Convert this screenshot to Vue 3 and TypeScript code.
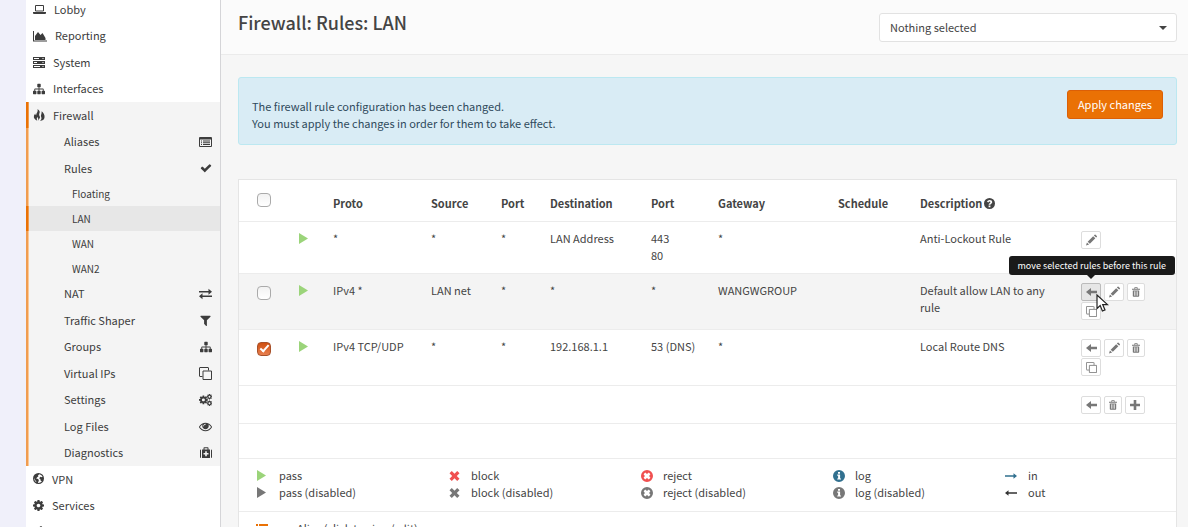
<script setup lang="ts">
import { ref } from 'vue'

interface Icon {
  box: string
  w: number
  h: number
  fill?: string
  line?: string
  lw?: number
}

const COG =
  'M1152 896q0-106-75-181t-181-75-181 75-75 181 75 181 181 75 181-75 75-181zm512-109v222q0 12-8 23t-20 13l-185 28q-19 54-39 91 35 50 107 138 10 12 10 25t-9 23q-27 37-99 108t-94 71q-12 0-26-9l-138-108q-44 23-91 38-16 136-29 186-7 28-36 28h-222q-14 0-24.5-8.5t-11.5-21.5l-28-184q-49-16-90-37l-141 107q-10 9-25 9-14 0-25-11-126-114-165-168-7-10-7-23 0-12 8-23 15-21 51-66.5t54-70.5q-27-50-41-99l-183-27q-13-2-21-12.5t-8-23.5v-222q0-12 8-23t19-13l186-28q14-46 39-92-40-57-107-138-10-12-10-24 0-10 9-23 26-36 98.5-107.5t94.5-71.5q13 0 26 10l138 107q44-23 91-38 16-136 29-186 7-28 36-28h222q14 0 24.5 8.5t11.5 21.5l28 184q49 16 90 37l142-107q9-9 24-9 13 0 25 10 129 119 165 170 7 8 7 22 0 12-8 23-15 21-51 66.5t-54 70.5q26 50 41 98l183 28q13 2 21 12.5t8 23.5z'

const icons: Record<string, Icon> = {
  laptop: { box: '0 0 13 12', w: 13, h: 12, fill: 'M0 9h13v1q0 1-1 1h-11q-1 0-1-1z', line: 'M2.5 2.5h8v5.5h-8z', lw: 1 },
  chart: { box: '0 0 14 12', w: 14, h: 12, fill: 'M0 1h1v9.5h13v1h-14zM2 10v-4l3-4 2.5 3 2-2 3 5v2z' },
  server: { box: '0 0 12 12', w: 12, h: 12, fill: 'M0 1h12v3h-12zM0 5h12v3h-12zM0 9h12v3h-12zM1 2v1h5v-1zM1 6v1h3v-1zM1 10v1h6v-1zM9.5 2v1h1v-1zM9.5 6v1h1v-1zM9.5 10v1h1v-1z' },
  sitemap: { box: '0 0 1792 1792', w: 12, h: 12, fill: 'M1792 1248v320q0 40-28 68t-68 28h-320q-40 0-68-28t-28-68v-320q0-40 28-68t68-28h96v-192h-512v192h96q40 0 68 28t28 68v320q0 40-28 68t-68 28h-320q-40 0-68-28t-28-68v-320q0-40 28-68t68-28h96v-192h-512v192h96q40 0 68 28t28 68v320q0 40-28 68t-68 28h-320q-40 0-68-28t-28-68v-320q0-40 28-68t68-28h96v-192q0-52 38-90t90-38h512v-192h-96q-40 0-68-28t-28-68v-320q0-40 28-68t68-28h320q40 0 68 28t28 68v320q0 40-28 68t-68 28h-96v192h512q52 0 90 38t38 90v192h96q40 0 68 28t28 68z' },
  fire: { box: '0 0 12 12', w: 12, h: 12, fill: 'M4.500 0C6.800 1.500 7.200 3 6.200 5C5.800 6.300 6.900 7 7 8.500L5.300 11.800C5.600 9.800 5 8.800 4.300 8C3.500 9.500 3.800 10.500 4.300 11.800C1.700 10.700.3 8.800 1 6.500L2.200 4.600C2.400 5.800 2.700 6.200 3.200 6.200C3.200 4 5.300 3 4.500 0zM8.700 2.200C10.400 3.800 12 6 11.500 8.500C11.200 10.600 9.500 11.700 7 12C8.500 10.500 8.700 9.500 8.200 8C7.300 6.500 8.800 5 8.700 2.200z' },
  list: { box: '0 0 13 12', w: 13, h: 12, fill: 'M1 1h11q1 0 1 1v8q0 1-1 1h-11q-1 0-1-1v-8q0-1 1-1zM1 3.500v6.500h11v-6.500zM2 4.500h1v1h-1zM4 4.500h7v1h-7zM2 6.300h1v1h-1zM4 6.300h7v1h-7zM2 8.100h1v1h-1zM4 8.100h7v1h-7z' },
  check: { box: '0 0 1792 1792', w: 12, h: 12, fill: 'M1671 566q0 40-28 68l-724 724-136 136q-28 28-68 28t-68-28l-136-136-362-362q-28-28-28-68t28-68l136-136q28-28 68-28t68 28l294 295 656-657q28-28 68-28t68 28l136 136q28 28 28 68z' },
  exchange: { box: '0 0 13 12', w: 13, h: 12, fill: 'M0 3h9.500v-2.200l3.500 3-3.500 3v-2.200h-9.500zM13 7.400v1.600h-9.500v2.200l-3.500-3 3.500-3v2.200z' },
  filter: { box: '0 0 1792 1792', w: 13, h: 13, fill: 'M1595 295q17 41-14 70l-493 493v742q0 42-39 59-13 5-25 5-27 0-45-19l-256-256q-19-19-19-45v-486l-493-493q-31-29-14-70 17-39 59-39h1280q42 0 59 39z' },
  clone: { box: '0 0 13 13', w: 13, h: 13, line: 'M4 4h8.500v8.500h-8.500zM3.500 9.500h-2.500q-.5 0-.5-.5v-8q0-.5.5-.5h8q.5 0 .5.5v2.500', lw: 1 },
  cog: { box: '128 128 1536 1536', w: 11, h: 11, fill: COG },
  eye: { box: '0 0 1792 1792', w: 13, h: 13, fill: 'M1664 960q-152-236-381-353 61 104 61 225 0 185-131.5 316.5t-316.5 131.5-316.5-131.5-131.5-316.5q0-121 61-225-229 117-381 353 133 205 333.5 326.5t434.5 121.5 434.5-121.5 333.5-326.5zm-720-384q0-20-14-34t-34-14q-125 0-214.5 89.5t-89.5 214.5q0 20 14 34t34 14 34-14 14-34q0-86 61-147t147-61q20 0 34-14t14-34zm848 384q0 34-20 69-140 230-376.5 368.5t-499.5 138.5-499.5-139-376.5-368q-20-35-20-69t20-69q140-229 376.5-368t499.5-139 499.5 139 376.5 368q20 35 20 69z' },
  medkit: { box: '0 0 12 12', w: 12, h: 12, fill: 'M0 3.500q0-1 1-1v8.500q-1 0-1-1zM11 2.500q1 0 1 1v6.500q0 1-1 1zM2 2.500h1.500v-1.500q0-.8.8-.8h3.400q.8 0 .8.8v1.500h1.500v8.500h-8zM4.500 2.500h3v-1.200h-3zM5.200 4.200v1.700h-1.700v1.700h1.700v1.700h1.600v-1.700h1.700v-1.700h-1.700v-1.700z' },
  globe: { box: '0 0 12 12', w: 11, h: 11, fill: 'M6 0a6 6 0 1 1 0 12a6 6 0 0 1 0-12zM6.800 1.400L5.400 2.600L6 3.600L4.600 4.600L3.400 6L5.600 6.600L6.400 8L5.400 10.800Q8 11 9.800 8.900L8.400 8.400L8 6.600L6.600 5.600L8.200 4.200L9.800 4.600L10.400 3.800Q9 1.600 6.800 1.400zM1.400 5.200L2.200 7.600L3.600 9.200L3.400 10.200Q.8 8.400 1.400 5.200z' },
  bolt: { box: '0 0 12 12', w: 11, h: 12, fill: 'M8 3h2l-2 3h2.500l-6 6 1.500-4.500h-2.500z' },
  play: { box: '0 0 9 11', w: 9, h: 11, fill: 'M0 0l9 5.500-9 5.500z' },
  times: { box: '0 0 10 10', w: 11, h: 10, fill: 'M2.300 0l2.700 2.700 2.700-2.700 2.300 2.300-2.700 2.700 2.700 2.700-2.300 2.300-2.700-2.700-2.700 2.700-2.300-2.300 2.700-2.700-2.700-2.700z' },
  reject: { box: '0 0 12 12', w: 12, h: 12, fill: 'M6 0a6 6 0 1 1 0 12a6 6 0 0 1 0-12zM4.200 2.600L2.600 4.200L3.900 6L2.600 7.800L4.200 9.400L6 8.100L7.800 9.400L9.400 7.800L8.100 6L9.400 4.200L7.800 2.600L6 3.900z' },
  info: { box: '0 0 12 12', w: 12, h: 12, fill: 'M6 0a6 6 0 1 1 0 12a6 6 0 0 1 0-12zM5 2v1.700h2v-1.700zM4.200 4.600v1.200h.9v2.600h-.9v1.200h3.800v-1.200h-.9v-3.800z' },
  help: { box: '0 0 12 12', w: 11, h: 11, fill: 'M6 0a6 6 0 1 1 0 12a6 6 0 0 1 0-12zM5 8.300v1.700h2v-1.700zM3.200 4.200l1.700.7q.3-1 1.200-1 .9 0 .9.700 0 .5-.9 1-1.100.6-1.100 1.800h2q0-.6.9-1.200 1.100-.7 1.100-1.800 0-2.200-2.800-2.200-2.200 0-3 2z' },
  right: { box: '0 0 12 10', w: 12, h: 10, fill: 'M0 4.300h8.500v-2.100l3.500 2.800-3.500 2.800v-2.100h-8.500z' },
  out: { box: '0 0 12 10', w: 12, h: 10, fill: 'M12 4.300h-8.500v-2.100l-3.500 2.800 3.500 2.800v-2.100h8.500z' },
  left: { box: '0 0 11 10', w: 11, h: 10, fill: 'M0 5l5-4v2.700h6v2.600h-6v2.700z' },
  pencil: { box: '0 0 12 12', w: 11, h: 12, fill: 'M0 12l1-3.400 2.400 2.400zM1.800 7.800l6-6 2.400 2.400-6 6zM8.600 1l.8-.8q.5-.4 1 0l1.400 1.400q.4.5 0 1l-.8.8z' },
  trash: { box: '0 0 10 12', w: 8, h: 10, fill: 'M0 1.800h3v-1.300q0-.5.500-.5h3q.5 0 .5.500v1.300h3v1.400h-10zM4 1v.8h2v-.8zM1 4h8v7q0 1-1 1h-6q-1 0-1-1zM2.700 5.200v5.600h.8v-5.600zM4.600 5.200v5.600h.8v-5.600zM6.500 5.200v5.600h.8v-5.600z' },
  plus: { box: '0 0 10 10', w: 10, h: 10, fill: 'M3.700 0h2.600v3.700h3.700v2.600h-3.700v3.700h-2.600v-3.700h-3.700v-2.600h3.700z' },
  lines: { box: '0 0 12 10', w: 12, h: 10, fill: 'M0 0h2v2h-2zM3 0h9v2h-9zM0 3h2v2h-2zM3 3h9v2h-9zM0 6h2v2h-2zM3 6h9v2h-9z' },
}

const Glyph = (p: { name: string }) => {
  const i = icons[p.name]
  return h('svg', { class: 'glyph', viewBox: i.box, width: i.w, height: i.h, 'aria-hidden': 'true' }, [
    i.fill ? h('path', { d: i.fill, fill: 'currentColor', 'fill-rule': 'evenodd' }) : null,
    i.line ? h('path', { d: i.line, fill: 'none', stroke: 'currentColor', 'stroke-width': i.lw }) : null,
  ])
}
Glyph.props = ['name']

const top = [
  { icon: 'laptop', label: 'Lobby' },
  { icon: 'chart', label: 'Reporting' },
  { icon: 'server', label: 'System' },
  { icon: 'sitemap', label: 'Interfaces' },
]
const firewall: { label: string; icon?: string; leaf?: boolean; active?: boolean }[] = [
  { label: 'Aliases', icon: 'list' },
  { label: 'Rules', icon: 'check' },
  { label: 'Floating', leaf: true },
  { label: 'LAN', leaf: true, active: true },
  { label: 'WAN', leaf: true },
  { label: 'WAN2', leaf: true },
  { label: 'NAT', icon: 'exchange' },
  { label: 'Traffic Shaper', icon: 'filter' },
  { label: 'Groups', icon: 'sitemap' },
  { label: 'Virtual IPs', icon: 'clone' },
  { label: 'Settings', icon: 'cogs' },
  { label: 'Log Files', icon: 'eye' },
  { label: 'Diagnostics', icon: 'medkit' },
]
const bottom = [
  { icon: 'globe', label: 'VPN' },
  { icon: 'cog', label: 'Services' },
  { icon: 'bolt', label: '' },
]

const rules = ref([
  { cells: ['*', '*', '*', 'LAN Address', '443\n80', '*', ''], text: 'Anti-Lockout Rule', pick: false, checked: false, actions: ['pencil'] },
  { cells: ['IPv4 *', 'LAN net', '*', '*', '*', 'WANGWGROUP', ''], text: 'Default allow LAN to any rule', pick: true, checked: false, hover: true, actions: ['left', 'pencil', 'trash', 'clone'] },
  { cells: ['IPv4 TCP/UDP', '*', '*', '192.168.1.1', '53 (DNS)', '*', ''], text: 'Local Route DNS', pick: true, checked: true, actions: ['left', 'pencil', 'trash', 'clone'] },
])
const all = ref(false)
const names: Record<string, string> = { left: 'Move', pencil: 'Edit', trash: 'Delete', clone: 'Clone', plus: 'Add' }

const legend = [
  [['play', 'pass', 'green'], ['play', 'pass (disabled)', 'grey']],
  [['times', 'block', 'red'], ['times', 'block (disabled)', 'grey']],
  [['reject', 'reject', 'red'], ['reject', 'reject (disabled)', 'grey']],
  [['info', 'log', 'blue'], ['info', 'log (disabled)', 'grey']],
  [['right', 'in', 'blue'], ['out', 'out', 'dark']],
]
</script>

<script lang="ts">
import { h } from 'vue'
</script>

<template>
  <div class="page">
    <nav class="side">
      <a v-for="t in top" :key="t.label" href="#" class="item"><Glyph :name="t.icon" />{{ t.label }}</a>
      <div class="open">
        <a href="#" class="item current"><Glyph name="fire" />Firewall</a>
        <a v-for="f in firewall" :key="f.label" href="#" class="item sub" :class="{ leaf: f.leaf, active: f.active }">
          <span>{{ f.label }}</span>
          <svg v-if="f.icon === 'cogs'" class="glyph" width="13" height="12" viewBox="0 0 26 24" aria-hidden="true">
            <path transform="translate(-1.500 1.500) scale(.0115)" :d="COG" fill="currentColor" />
            <path transform="translate(14.500 -1) scale(.0072)" :d="COG" fill="currentColor" />
            <path transform="translate(14.500 12) scale(.0072)" :d="COG" fill="currentColor" />
          </svg>
          <Glyph v-else-if="f.icon" :name="f.icon" />
        </a>
      </div>
      <a v-for="b in bottom" :key="b.icon" href="#" class="item"><Glyph :name="b.icon" />{{ b.label }}</a>
    </nav>

    <div class="main">
      <header class="head">
        <h1>Firewall: Rules: LAN</h1>
        <div class="pickbox">
          <select aria-label="Category">
            <option>Nothing selected</option>
          </select>
          <span class="caret"></span>
        </div>
      </header>

      <main class="content">
        <section class="alert">
          <p>The firewall rule configuration has been changed.<br />You must apply the changes in order for them to take effect.</p>
          <button type="button" class="apply">Apply changes</button>
        </section>

        <section class="panel">
          <table>
            <colgroup>
              <col class="c-check" /><col class="c-play" /><col class="c-proto" /><col class="c-source" /><col class="c-port" />
              <col class="c-dest" /><col class="c-dport" /><col class="c-gate" /><col class="c-sched" /><col /><col class="c-act" />
            </colgroup>
            <thead>
              <tr>
                <th class="first"><input v-model="all" type="checkbox" aria-label="Select all rules" /></th>
                <th></th>
                <th>Proto</th><th>Source</th><th>Port</th><th>Destination</th><th>Port</th><th>Gateway</th><th>Schedule</th>
                <th>Description <Glyph name="help" /></th>
                <th></th>
              </tr>
            </thead>
            <tbody>
              <tr v-for="r in rules" :key="r.text" :class="{ hovered: r.hover }">
                <td class="first"><input v-if="r.pick" v-model="r.checked" type="checkbox" :aria-label="r.text" /></td>
                <td class="green"><Glyph name="play" /></td>
                <td v-for="(c, i) in r.cells" :key="i" class="cell">{{ c }}</td>
                <td class="desc">{{ r.text }}</td>
                <td class="tools">
                  <div class="actions">
                    <span v-for="a in r.actions" :key="a" class="slot">
                      <button type="button" class="act" :class="[a, { pressed: r.hover && a === 'left' }]" :aria-label="names[a]"><Glyph :name="a" /></button>
                      <template v-if="r.hover && a === 'left'">
                        <span class="tip" role="tooltip">move selected rules before this rule</span>
                        <svg class="pointer" width="13" height="19" viewBox="0 0 13 19" aria-hidden="true">
                          <path d="M1 1v13.500l3.200-3 2.200 5.500 2.600-1.100-2.300-5.300h4.800z" fill="#fff" stroke="#222" stroke-width="1.200" />
                        </svg>
                      </template>
                    </span>
                  </div>
                </td>
              </tr>
              <tr class="bulk">
                <td colspan="10"></td>
                <td>
                  <div class="actions">
                    <button v-for="a in ['left', 'trash', 'plus']" :key="a" type="button" class="act" :class="a" :aria-label="names[a]"><Glyph :name="a" /></button>
                  </div>
                </td>
              </tr>
              <tr class="blank"><td colspan="11"></td></tr>
            </tbody>
          </table>
          <div class="legend">
            <div v-for="(col, i) in legend" :key="i">
              <div v-for="e in col" :key="e[1]" class="entry">
                <span class="mark" :class="e[2]"><Glyph :name="e[0]" /></span>{{ e[1] }}
              </div>
            </div>
          </div>
          <div class="aliases"><Glyph name="lines" class="orange" /><span>Alias (click to view/edit)</span></div>
        </section>
      </main>
    </div>
  </div>
</template>

<style>
html,
body {
  overflow: hidden;
  background: #f6f6f6;
}
</style>

<style scoped>
.page {
  display: flex;
  height: 100vh;
  overflow: hidden;
  box-sizing: border-box;
  padding-left: 26px;
  background: #f0f0fa;
  color: #444;
  font: 11px/17px "Noto Sans CJK SC", "Noto Sans", sans-serif;
}
.side {
  flex: 0 0 194px;
  margin-top: -4px;
  background: #fff;
  border-right: 1px solid #d5d5d8;
  line-height: 1.68;
}
.item {
  display: flex;
  align-items: center;
  gap: 8px;
  padding: 4px 8px 4px 7px;
  color: #3c3c3c;
  text-decoration: none;
}
.glyph {
  flex: none;
}
:deep(.glyph) {
  flex: none;
}
.open {
  background: #f4f4f4;
}
.open .item {
  border-left: 2px solid #f09c50;
  box-shadow: inset 1px 0 #fcc896;
  padding-left: 5px;
}
.open .current,
.open .active {
  border-left-color: #ea7105;
  box-shadow: inset 1px 0 #f09c50;
}
.open .sub {
  justify-content: space-between;
  padding-left: 36px;
}
.open .leaf {
  padding: 5px 8px 3px 44px;
  font-size: 10px;
}
.open .active {
  background: #e7e7e7;
}
.main {
  flex: 1;
  min-width: 0;
  background: #f6f6f6;
}
.head {
  display: flex;
  justify-content: space-between;
  align-items: flex-start;
  padding: 13px 11px 12px 17px;
  background: #fbfbfb;
  border-bottom: 1px solid #ebebeb;
}
h1 {
  margin: 0;
  font-size: 18px;
  line-height: 18px;
  font-weight: 500;
}
.pickbox {
  position: relative;
  width: 298px;
}
select {
  appearance: none;
  display: block;
  width: 100%;
  height: 29px;
  padding: 0 10px;
  border: 1px solid #e2e2e2;
  border-radius: 3px;
  background: #fff;
  color: #444;
  font: inherit;
}
.caret {
  position: absolute;
  right: 10px;
  top: 13px;
  border: 4px solid transparent;
  border-top-color: #444;
  border-bottom: 0;
}
.content {
  padding: 22px 11px 0 17px;
}
.alert {
  display: flex;
  justify-content: space-between;
  align-items: flex-start;
  padding: 12px 13px 12px;
  background: #d9ecf5;
  border: 1px solid #bce8f1;
  border-radius: 3px;
  color: #2f4a5c;
}
.alert p {
  margin: 8px 0 0;
}
.apply {
  height: 29px;
  margin-bottom: 13px;
  padding: 0 10px;
  border: 1px solid #dc5f07;
  border-radius: 3px;
  background: #ea7105;
  color: #fff;
  font: inherit;
}
.panel {
  margin-top: 34px;
  background: #fff;
  border: 1px solid #e5e5e5;
}
table {
  width: 100%;
  table-layout: fixed;
  border-collapse: separate;
  border-spacing: 0;
}
.c-check { width: 60px; }
.c-play { width: 34px; }
.c-proto { width: 98px; }
.c-source { width: 70px; }
.c-port { width: 49px; }
.c-dest { width: 101px; }
.c-dport { width: 67px; }
.c-gate { width: 120px; }
.c-sched { width: 82px; }
.c-act { width: 95px; }
th,
td {
  padding: 8px 0 9px;
  border-bottom: 1px solid #ececec;
  text-align: left;
  vertical-align: top;
}
th {
  padding: 15px 0 9px;
  font-weight: 700;
}
th :deep(.glyph) {
  margin-left: -1px;
  vertical-align: -1px;
}
.first {
  padding-left: 18px;
}
th.first {
  padding-top: 13px;
}
td.first {
  padding-top: 12px;
}
.cell {
  white-space: pre-line;
}
.desc {
  padding-right: 16px;
}
.hovered td {
  background: #f4f4f4;
}
input[type="checkbox"] {
  appearance: none;
  display: block;
  position: relative;
  box-sizing: border-box;
  width: 14px;
  height: 14px;
  margin: 0;
  border: 1px solid #aaa;
  border-radius: 4px;
  background: linear-gradient(#f2f2f2, #fff);
}
input[type="checkbox"]:checked {
  border-color: #a8512a;
  background: linear-gradient(#cf4f10, #e88050);
}
input[type="checkbox"]:checked::after {
  content: "";
  position: absolute;
  left: 4px;
  top: 0;
  width: 3px;
  height: 7px;
  border: solid #fff;
  border-width: 0 2px 2px 0;
  transform: rotate(42deg);
}
.green { color: #9bd47a; }
.grey { color: #777; }
.red { color: #f05050; }
.blue { color: #31708f; }
.dark { color: #333; }
.orange { color: #ea7105; }
td.green :deep(.glyph) {
  display: block;
  margin-top: 3px;
}
td.tools {
  padding-top: 9px;
}
.actions {
  display: flex;
  flex-wrap: wrap;
  gap: 1px 3px;
  width: 72px;
}
.slot {
  position: relative;
  display: flex;
}
.act {
  display: flex;
  align-items: center;
  justify-content: center;
  box-sizing: border-box;
  width: 20px;
  height: 18px;
  padding: 0;
  border: 1px solid #ddd;
  border-radius: 2px;
  background: #fff;
  color: #777;
}
.act.trash {
  width: 18px;
}
.act.pressed {
  background: #e6e6e6;
  border-color: #bbb;
}
.clone :deep(.glyph) {
  width: 11px;
  height: 11px;
}
.tip {
  position: absolute;
  right: -74px;
  bottom: 26px;
  padding: 1px 9px;
  border-radius: 3px;
  background: #1a1a1a;
  color: #fff;
  font-size: 9px;
  white-space: nowrap;
}
.tip::after {
  content: "";
  position: absolute;
  right: 80px;
  top: 100%;
  border: 4px solid transparent;
  border-top-color: #1a1a1a;
  border-bottom: 0;
}
.pointer {
  position: absolute;
  left: 15px;
  top: 11px;
  z-index: 2;
}
.bulk td {
  padding-top: 10px;
}
.blank td {
  height: 17px;
}
.legend {
  display: grid;
  grid-template-columns: 192fr 192fr 192fr 172fr 171fr;
  padding: 8px 0 10px;
  padding-left: 18px;
  border-bottom: 1px solid #ececec;
}
.entry {
  display: flex;
}
.mark {
  display: flex;
  align-items: center;
  width: 22px;
}
.legend > :last-child .mark {
  width: 23px;
}
.aliases {
  display: flex;
  align-items: center;
  gap: 29px;
  padding: 8px 17px;
}
</style>
